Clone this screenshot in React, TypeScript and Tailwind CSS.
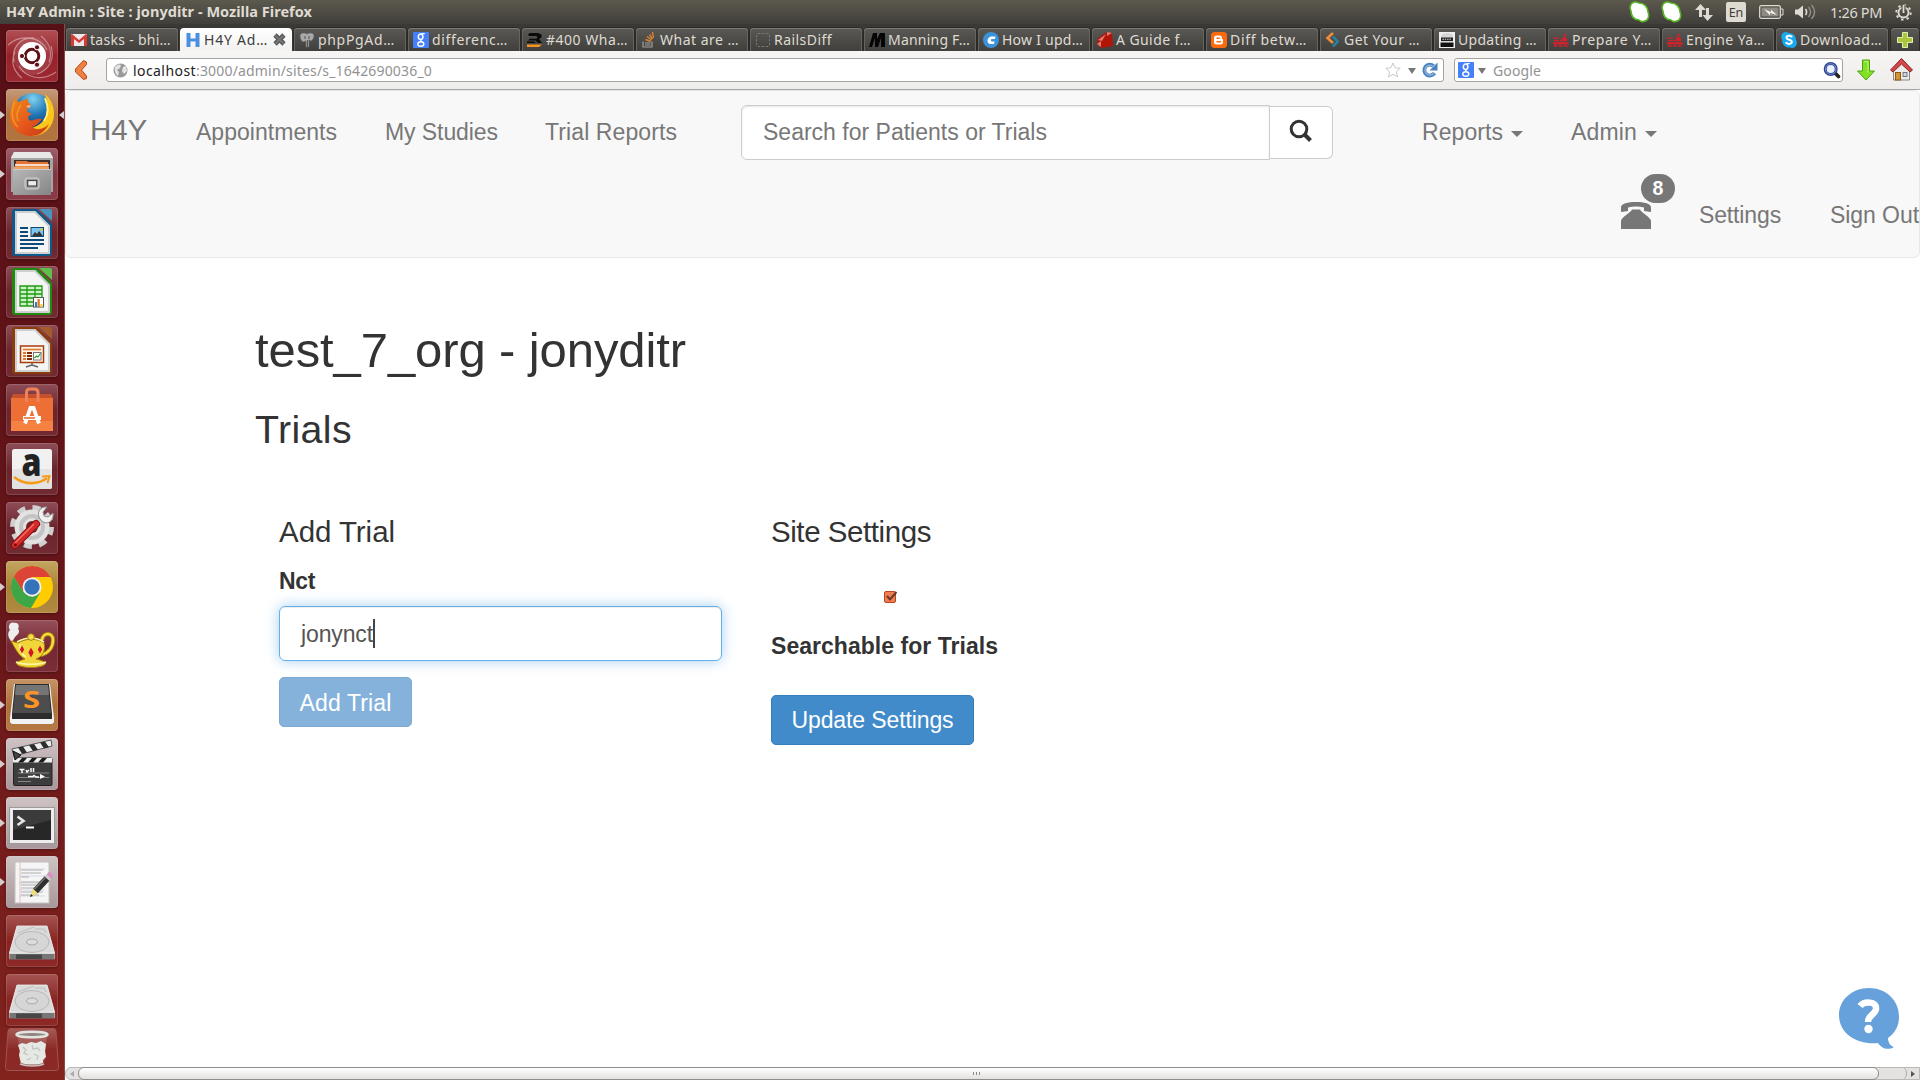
import React, { useLayoutEffect, useRef, useState } from "react";

/* Text whose letter spacing is adjusted so that the run fills a given width. */
function Fit({ w, className = "", children }: { w: number; className?: string; children: React.ReactNode }) {
  const ref = useRef<HTMLSpanElement>(null);
  const [gap, setGap] = useState(0);
  useLayoutEffect(() => {
    const el = ref.current;
    if (!el) return;
    const n = (el.textContent || "").length;
    setGap((w - el.getBoundingClientRect().width) / n);
  }, [w]);
  return (
    <span ref={ref} className={`inline-block shrink-0 whitespace-pre ${className}`} style={{ letterSpacing: gap }}>
      {children}
    </span>
  );
}

/* ---------- launcher icons, 52 x 52 ---------- */

const Ubuntu = () => (
  <>
    <circle cx="26" cy="26" r="19" fill="#fff" opacity=".1" />
    <g fill="none" stroke="#fff" strokeWidth="1.2" opacity=".4">
      <path d="M8 32C5 18 14 7 28 8M16 48C6 40 5 30 9 22M45 16c4 12-1 24-14 28M35 6c10 8 11 18 8 26M2 15C14 4 34 6 41 20M50 42C36 52 20 48 13 36" />
    </g>
    <circle cx="26" cy="26" r="14" fill="#fff" />
    <circle cx="26" cy="26" r="6.8" fill="none" stroke="#5c1216" strokeWidth="3" />
    <g fill="#5c1216" stroke="#fff" strokeWidth="1">
      <circle cx="16" cy="26" r="2.6" />
      <circle cx="31" cy="17.3" r="2.6" />
      <circle cx="31" cy="34.7" r="2.6" />
    </g>
  </>
);

const Firefox = () => (
  <>
    <defs>
      <radialGradient id="ffb" cx=".5" cy=".15" r=".8">
        <stop offset="0" stopColor="#7fd3ef" />
        <stop offset=".5" stopColor="#2277b8" />
        <stop offset="1" stopColor="#0c2f66" />
      </radialGradient>
      <linearGradient id="ffo" x1="0" y1="0" x2="1" y2="1">
        <stop offset="0" stopColor="#f08a1c" />
        <stop offset=".55" stopColor="#e4561c" />
        <stop offset="1" stopColor="#c93a14" />
      </linearGradient>
    </defs>
    <circle cx="27" cy="24" r="20" fill="url(#ffb)" />
    <path d="M39 5c6 5 9 12 9 20 0 13-10 22-22 22-8 0-14-4-18-9 12 4 26 1 31-9 4-8 3-17 0-24z" fill="#fbc51d" />
    <path d="M39 9c3 7 4 16-1 23" stroke="#fff27a" strokeWidth="2" fill="none" />
    <path d="M9 8c1 3 2 4 4 5 3-2 7-2 9-4-1 3 1 5 3 7 0 2-3 3-4 5 0 3 3 2 5 4-3 1-5 3-3 6 4 2 7-2 13-1-3 3-5 7-10 8 5 4 12 2 17-3-4 8-10 12-18 12C12 47 4 38 4 27c0-7 3-12 5-19z" fill="url(#ffo)" />
    <path d="M9 12c-4 9-4 20 3 26M15 16c-4 5-5 10-3 16" stroke="#f6a22b" strokeWidth="1.6" fill="none" opacity=".7" />
    <path d="M20 17l5-1-2 3z" fill="#f7c3a4" />
  </>
);

const Files = () => (
  <>
    <defs>
      <linearGradient id="fl" x1="0" y1="0" x2="1" y2="1">
        <stop offset="0" stopColor="#b8b8b8" />
        <stop offset="1" stopColor="#858585" />
      </linearGradient>
    </defs>
    <path d="M8 4h36l3 5v35H5V9z" fill="#a5a5a5" />
    <path d="M8 4h36l3 6H5z" fill="#e8e8e8" />
    <rect x="8" y="12" width="36" height="10" fill="#3c2f2b" />
    <path d="M10 13h11l1 1h20v8H9z" fill="#e07536" />
    <path d="M9 17h34" stroke="#fff" strokeWidth="1.4" />
    <path d="M8 18.5h35v3H8z" fill="#f0a35c" />
    <rect x="7" y="21" width="38" height="26" fill="url(#fl)" />
    <path d="M7 21.5h38" stroke="#ccc" />
    <rect x="19" y="30" width="14" height="11" rx="2" fill="#a6a6a6" stroke="#d3d3d3" />
    <rect x="21.7" y="32.5" width="9" height="5.5" fill="#ededed" stroke="#444" strokeWidth="1.2" />
  </>
);

const Doc = ({ dark, light, children }: { dark: string; light: string; children: React.ReactNode }) => (
  <>
    <path d="M8 2h23l15 15v29a3 3 0 0 1-3 3H9a3 3 0 0 1-3-3V5a3 3 0 0 1 2-3z" fill={dark} />
    <path d="M10 5h19l14 14v27H10z" fill="#f4f4f4" stroke="#cfcfcf" strokeWidth="2" />
    <path d="M33 2h11a2 2 0 0 1 2 2v10z" fill={light} />
    {children}
  </>
);

const Writer = () => (
  <Doc dark="#0d5a8a" light="#4b93bf">
    <path d="M14 21h8M14 25h8M14 29h8M14 33h24M14 37h24M14 41h18" stroke="#0d4a78" strokeWidth="1.8" />
    <rect x="25" y="20.500" width="12.500" height="9" fill="#7cc5ee" stroke="#0d4a78" />
    <path d="M26 29l3-4 2 2 2-3 4 5z" fill="#333" />
    <circle cx="35.500" cy="22.500" r="1.300" fill="#f2c21a" />
  </Doc>
);
const Calc = () => (
  <Doc dark="#1f8a10" light="#5fbf4b">
    <rect x="14" y="20" width="22" height="20" fill="#cdf2c4" />
    <path d="M14 20h22v20H14zM14 24h22M14 28h22M14 32h22M14 36h22M21 20v20M29 20v20" stroke="#1f9a14" strokeWidth="1.3" fill="none" />
    <rect x="27.500" y="31.500" width="10" height="9.500" fill="#fff" stroke="#555" />
    <path d="M29 36h2v5h-2z" fill="#2b7fd0" />
    <path d="M31.500 33h2.300v8h-2.300z" fill="#e07a20" />
    <path d="M34.500 38h2v3h-2z" fill="#f3cc2c" />
  </Doc>
);
const Impress = () => (
  <Doc dark="#8a3c0c" light="#a45c2c">
    <rect x="14.500" y="21" width="23" height="16.500" fill="#fff2e6" stroke="#a83c10" strokeWidth="1.500" />
    <path d="M17 24.500h18" stroke="#e0782c" strokeWidth="1.600" />
    <path d="M17 28h3M17 31h3M17 34h3" stroke="#e0782c" strokeWidth="1.800" />
    <path d="M21 28h5M21 31h5M21 34h5" stroke="#7a2c0c" strokeWidth="1.800" />
    <rect x="27.500" y="27.500" width="7.500" height="7.500" fill="#fff" stroke="#777" />
    <path d="M28.500 33l2-2 1.500 1 2.500-3.500" stroke="#2a9a2a" strokeWidth="1.200" fill="none" />
    <path d="M26 38v2l-6 2M26 40l6 2" stroke="#666" strokeWidth="1.500" fill="none" />
  </Doc>
);

const Software = () => (
  <>
    <path d="M7 10h38l2 4H5z" fill="#c4502c" />
    <path d="M5 14h42v33H5z" fill="#ee6f35" />
    <path d="M5 37h42v10H5z" fill="#f58242" />
    <path d="M20.500 18V8.500C20.500 6 22 5 24 5h4c2 0 4 1 4 3.500V18" fill="none" stroke="#f0805a" strokeWidth="3" />
    <path d="M19 39.500l5.500-15.500h3L33 39.500" fill="none" stroke="#fff" strokeWidth="3.800" />
    <path d="M17 34h18" stroke="#fff" strokeWidth="4" />
    <path d="M18 34h11" stroke="#e9632c" strokeWidth="1.500" />
  </>
);

const Amazon = () => (
  <>
    <rect x="6" y="6" width="40" height="40" rx="2.500" fill="#f1f1f1" />
    <rect x="6" y="26" width="40" height="20" rx="2.500" fill="#e2e2e2" />
    <text x="15.500" y="33" fontFamily="Open Sans, sans-serif" fontSize="38" fontWeight="800" fill="#222" textLength="20" lengthAdjust="spacingAndGlyphs">a</text>
    <path d="M8 34c10 8 24 8 33 1" stroke="#f69a1a" strokeWidth="2.600" fill="none" />
    <path d="M36 33.500l7.500-.5-2 7" stroke="#f69a1a" strokeWidth="2" fill="none" />
  </>
);

const Gear = () => (
  <>
    <circle cx="26" cy="25" r="19.500" fill="none" stroke="#cfcfcf" strokeWidth="5" strokeDasharray="8 7.300" />
    <circle cx="26" cy="25" r="17.500" fill="#e2e2e2" />
    <circle cx="26" cy="25" r="11" fill="none" stroke="#c3c3c3" strokeWidth="4" />
    <circle cx="26" cy="25" r="6" fill="#6d242c" />
    <path d="M28 25l7-6" stroke="#c9c9c9" strokeWidth="6" />
    <path d="M41 5c-7-1-11 6-7 12l3 3c6 3 11-2 10-9l-5 4-4-1-1-4z" fill="#f0f0f0" stroke="#8e8e8e" />
    <path d="M9 43l21-21" stroke="#8f1010" strokeWidth="8" strokeLinecap="round" />
    <path d="M9 43l21-21" stroke="#d52b28" strokeWidth="6" strokeLinecap="round" />
    <path d="M9 41l19-19" stroke="#f0736c" strokeWidth="1.400" />
    <circle cx="9.500" cy="43" r="1.400" fill="#6b0c0c" />
  </>
);

const Chrome = () => (
  <>
    <circle cx="26" cy="26" r="21" fill="#fc0" />
    <path d="M7.800 15.500A21 21 0 0 1 44.500 16H26l-9 15z" fill="#dc4437" />
    <path d="M7.800 15.500A21 21 0 0 0 25 47l9.500-16-8 5-9-5z" fill="#3fa648" />
    <circle cx="26" cy="26" r="9.500" fill="#f2f2f2" />
    <circle cx="26" cy="26" r="7.700" fill="#3573ba" />
  </>
);

const Teapot = () => (
  <>
    <path d="M6 22c-4-4-5-9-2-12-3-4 1-9 4-7 4-1 6 3 4 6 3 3-1 6-3 8z" fill="#eee" />
    <path d="M36 20c1-8 11-8 11 0 0 7-4 13-12 15" fill="none" stroke="#b18a0c" strokeWidth="4" />
    <path d="M36 20c1-8 11-8 11 0 0 7-4 13-12 15" fill="none" stroke="#f3dc3c" strokeWidth="2.400" />
    <path d="M5 21l7 2c8-5 19-5 26 0 2 8-2 14-8 16 4 1 8 2 10 4-2 6-28 6-30 0 2-2 6-3 9-4-6-3-9-9-14-18z" fill="#f1d63a" stroke="#a67f08" />
    <path d="M11 22c9-5 19-5 27 0M10 42c8 3 22 3 30 0M14 24c-1 5 2 11 6 13" stroke="#fff7a8" strokeWidth="1.600" fill="none" />
    <circle cx="25" cy="17" r="3.300" fill="#f4de4c" stroke="#a67f08" />
    <path d="M16 25.500l2.200 4-2.200 4-2.200-4zM25 27.500l2.700 5-2.700 5-2.700-5zM34 25.500l2.200 4-2.200 4-2.200-4z" fill="#d4182c" />
  </>
);

const Sublime = () => (
  <>
    <path d="M8 5h36l4 34v4a3 3 0 0 1-3 2H7a3 3 0 0 1-3-2v-4z" fill="#f2f2f2" />
    <path d="M9 5h34l3 30v5H6v-5z" fill="#2c2c2c" />
    <path d="M10 6h32l3 28H7z" fill="#4d4d4d" />
    <path d="M10 6h32l1 10H9z" fill="#757575" />
    <text x="17" y="28.500" fontFamily="Open Sans, sans-serif" fontSize="23" fontWeight="700" fill="#fb9327" textLength="17" lengthAdjust="spacingAndGlyphs">S</text>
  </>
);

const Clapper = () => (
  <>
    <rect x="7.500" y="20" width="38.500" height="27.500" rx="1" fill="#3d3d3d" stroke="#222" />
    <path d="M7 20h39v4.500H7z" fill="#eee" />
    <path d="M12 24.500l4-4.500h5l-4 4.500zM22 24.500l4-4.500h5l-4 4.500zM32 24.500l4-4.500h5l-4 4.500z" fill="#1c1c1c" />
    <path d="M6 11L45 2l1 6-38 10z" fill="#eee" stroke="#555" />
    <path d="M12 9.600l5-1.100 4 6-5 1.300zM23 7.200l5-1.200 4 5.800-5 1.300zM34 4.600l5-1.200 4 5.800-5 1.300z" fill="#2c2c2c" />
    <path d="M7 13l8 4-6 5z" fill="#444" stroke="#111" />
    <path d="M12 35h31M12 39.500h31M12 43.500h13" stroke="#999" strokeWidth=".8" />
    <path d="M13.500 31.500h5M16 31v4M20 32l1 2 2-2M25 30v4M27.500 30v4M22 38.500h5l1-1 2 1.500h3" stroke="#fff" strokeWidth="1.500" fill="none" />
    <path d="M34 36l5 2.500-5 2.500z" fill="#fff" />
  </>
);

const Terminal = () => (
  <>
    <rect x="3.500" y="10.500" width="45" height="36" fill="#ededed" stroke="#9b9b9b" />
    <rect x="7" y="13" width="38" height="30" fill="#272727" />
    <path d="M7 13h38v10L7 33z" fill="#3b3b3b" />
    <path d="M11.500 19.500l6 4.500-6 4" stroke="#e5e5e5" strokeWidth="2.600" fill="none" />
    <path d="M20 30.500h8" stroke="#fff" strokeWidth="2" />
  </>
);

const Editor = () => (
  <>
    <rect x="9" y="6" width="34" height="41" fill="#f5f5f5" stroke="#c2c2c2" />
    <path d="M13 13h26M13 20h26M13 27h26M13 34h26M13 40h26" stroke="#d5dbe6" strokeWidth="1" />
    <path d="M15 14h22M15 17h20M15 21h8M15 26h20M15 29h18M15 32h14M15 36h22M15 39h18" stroke="#8a8a8a" strokeWidth=".8" opacity=".8" />
    <path d="M14 6v41" stroke="#eaa" strokeWidth=".7" />
    <path d="M24 41l3-8.500 5 5z" fill="#eedc78" />
    <path d="M24 41l1-3 2 2z" fill="#222" />
    <path d="M29.500 35L41 22.500" stroke="#2f2f2f" strokeWidth="6.500" />
    <path d="M28.500 33L39.500 21.500" stroke="#777" strokeWidth="1.400" />
    <path d="M41 22.500l2-2" stroke="#c9c9c9" strokeWidth="6.500" />
    <path d="M43 20.500l2.500-2.500" stroke="#db8fc0" strokeWidth="6.500" />
  </>
);

const Disk = () => (
  <>
    <path d="M11 11h30l8 28v5H3v-5z" fill="#cfcfcf" />
    <path d="M11 11h30l7.500 27h-45z" fill="#dadada" stroke="#efefef" strokeWidth=".8" />
    <ellipse cx="26" cy="27" rx="17" ry="10.500" fill="#d6d6d6" stroke="#b4b4b4" strokeWidth=".9" />
    <ellipse cx="26" cy="27" rx="5.500" ry="3" fill="#dcdcdc" stroke="#a2a2a2" strokeWidth=".9" />
    <path d="M12 18l16-6M29 14h9l2 4" stroke="#bdbdbd" fill="none" />
    <path d="M3.500 39h45v5.500h-45z" fill="#777" />
    <path d="M10 39.500h26v4.500H10z" fill="#333" opacity=".7" />
  </>
);

const Trash = () => (
  <>
    <path d="M12 8l2 28c5 3 19 3 24 0l3-28z" fill="#fff" opacity=".16" />
    <path d="M12 17l4-2 4 1 5-2 5 1 5-2 5 3-1 7 1 6-3 3v3c-6 2-15 2-22 0l-1-4-1-4 1-4z" fill="#e6e8e4" />
    <path d="M17 19l3 3-2 3 4 2M26 17l1 4 5-1 2 3M28 26l4 2-1 4M21 32l4-2" stroke="#c1c4bf" strokeWidth="1.300" fill="none" />
    <path d="M14 36c6 2.500 19 2.500 24 0" stroke="#c6c0be" strokeWidth="1.500" fill="none" />
    <ellipse cx="26" cy="6.500" rx="15.500" ry="2.800" fill="#8f8482" stroke="#e2e4e0" strokeWidth="2.500" />
  </>
);

const plain = "bg-gradient-to-b from-[#8e4d57] via-[#6a242c] to-[#722a33]";
const silver = "bg-gradient-to-b from-[#cfc3c4] to-[#a8979a]";
const red = "bg-gradient-to-b from-[#a55353] via-[#872420] to-[#8d2a28]";

const launcher: { icon: React.ReactNode; bg: string; run?: boolean; active?: boolean }[] = [
  { icon: <Ubuntu />, bg: "bg-gradient-to-b from-[#b04f55] via-[#962029] to-[#9c2a33]" },
  { icon: <Firefox />, bg: "bg-gradient-to-b from-[#c49a78] via-[#ae7040] to-[#b3753f]", run: true, active: true },
  { icon: <Files />, bg: "bg-gradient-to-b from-[#9d5f6a] via-[#833440] to-[#8a3b47]", run: true },
  { icon: <Writer />, bg: plain },
  { icon: <Calc />, bg: plain },
  { icon: <Impress />, bg: plain },
  { icon: <Software />, bg: plain },
  { icon: <Amazon />, bg: plain },
  { icon: <Gear />, bg: plain },
  { icon: <Chrome />, bg: "bg-gradient-to-b from-[#c4a660] via-[#aa8136] to-[#b08a42]", run: true },
  { icon: <Teapot />, bg: "bg-gradient-to-b from-[#96515b] via-[#762631] to-[#7b2e38]" },
  { icon: <Sublime />, bg: "bg-gradient-to-b from-[#c69467] via-[#ae7038] to-[#b57a45]", run: true },
  { icon: <Clapper />, bg: silver, run: true },
  { icon: <Terminal />, bg: silver, run: true },
  { icon: <Editor />, bg: silver, run: true },
  { icon: <Disk />, bg: red },
  { icon: <Disk />, bg: red },
];

function Launcher() {
  return (
    <aside className="flex w-[65px] shrink-0 flex-col gap-[7px] border-r border-[#8c4848] bg-gradient-to-b from-[#561016] via-[#651519] to-[#82231e] pt-[6px]">
      {launcher.map((l, i) => (
        <div key={i} className="flex h-[52px] shrink-0 items-center">
          <div className="w-[6px]">
            {l.run && <div className="h-0 w-0 border-y-[4px] border-l-[5px] border-y-transparent border-l-[#d5cccc]" />}
          </div>
          <div className={`h-[52px] w-[52px] rounded-[4px] shadow-[inset_0_0_0_1px_rgba(255,255,255,0.13),0_1px_3px_rgba(0,0,0,0.3)] ${l.bg}`}>
            <svg width="52" height="52" viewBox="0 0 52 52" className="overflow-visible">{l.icon}</svg>
          </div>
          {l.active && <div className="ml-px h-0 w-0 border-y-[4px] border-r-[5px] border-y-transparent border-r-[#d5cccc]" />}
        </div>
      ))}
      <div className="-mt-[5px] ml-[5px] h-[43px] w-[54px]">
        <svg width="54" height="43" viewBox="0 0 54 43">
          <defs>
            <linearGradient id="trash" x1="0" y1="0" x2="0" y2="1">
              <stop offset="0" stopColor="#a65a58" />
              <stop offset=".5" stopColor="#8a2925" />
            </linearGradient>
          </defs>
          <path d="M6 .5h42a3 3 0 0 1 3 3l2.500 36a3 3 0 0 1-3 3h-47a3 3 0 0 1-3-3L3 3.500a3 3 0 0 1 3-3z" fill="url(#trash)" stroke="#a35350" />
          <g transform="translate(1 0)"><Trash /></g>
        </svg>
      </div>
    </aside>
  );
}

/* ---------- tab icons, 16 x 16 ---------- */

const GoogleG = () => (
  <>
    <rect width="16" height="16" rx="1" fill="#4680f8" />
    <g fill="none" stroke="#fff">
      <ellipse cx="7.600" cy="4.800" rx="2.300" ry="2.700" strokeWidth="1.500" />
      <path d="M8.500 1.600h3.300" strokeWidth="1.100" />
      <path d="M8.500 7.500c-1.300 1-.8 1.500.5 2.200" strokeWidth="1.300" />
      <ellipse cx="7.800" cy="12" rx="3" ry="2.300" strokeWidth="1.400" />
    </g>
  </>
);
const Train = () => (
  <path
    d="M0 5.500h6v1.300H0zM1 8h5v1.300H1zM7 7.500h4v1.800H7zM9.500 5h1.200V2h2.500v1.300h-1v2.700H14v3.300H9.500zM0 10.300h14.500l1.500 1.500v.8H0zM1 13.300h3.500v1.400H1zM6 13.300h3.500v1.400H6zM11 13.300h3.500v1.400H11z"
    fill="#d81f2c"
  />
);

const tabs: { t: string; w: number; icon: React.ReactNode }[] = [
  { t: "tasks - bhi…", w: 81, icon: <><rect y="2" width="16" height="12" rx="1" fill="#e9e9e9" /><path d="M0 3v11h3V7l5 4 5-4v7h3V3l-1-1-7 6-7-6z" fill="#d93a35" /></> },
  { t: "H4Y Ad…", w: 64, icon: <path d="M1.500 1h4v5.500h5V1h4v14h-4V9.500h-5V15h-4z" fill="#4a90e2" /> },
  { t: "phpPgAd…", w: 77, icon: <><path d="M1 3c2-3 5-2 7-1 3-2 6-1 7 1 0 3-1 5-3 6l-2-1v7H7V9L4 10C2 9 1 6 1 3z" fill="#a9a9a9" stroke="#666" strokeWidth=".7" /><path d="M6 4v3M10 4v3M8.500 8v7" stroke="#555" /></> },
  { t: "differenc…", w: 76, icon: <GoogleG /> },
  { t: "#400 Wha…", w: 82, icon: <><path d="M1 2.500l2-1.500h8l3.500 1.500v3L12 7l3 4h-4L8.500 8.500H1L3 6.700h6.500l1-1.200-1-1.500H2z" fill="#0a0a0a" /><path d="M0 9.500h7l2 1.500H0z" fill="#0a0a0a" /><path d="M0 12.500h15l-3 2.500H0z" fill="#f7931e" /></> },
  { t: "What are …", w: 79, icon: <><path d="M2 9.500V15h9V9.500" stroke="#a0a09c" strokeWidth="1.200" fill="none" /><path d="M4 13h5.500M4 11h5.500" stroke="#a0a09c" strokeWidth="1.100" /><path d="M4.500 7.500L10 9.500M6 4.500l4.500 3.500M8.500 2.500L11.500 7M11.500 0l1 6" stroke="#dd8434" strokeWidth="1.400" /></> },
  { t: "RailsDiff", w: 58, icon: <rect x="1.500" y="1.500" width="13" height="13" rx="1.500" fill="none" stroke="#777" strokeDasharray="2.500 1.500" /> },
  { t: "Manning F…", w: 82, icon: <path d="M4 1h4v6l3-6h5v14h-4V6l-3 9H6V6l-3 9H0z" fill="#050505" /> },
  { t: "How I upd…", w: 81, icon: <><circle cx="8" cy="8" r="8" fill="#3a92d8" /><path d="M12.500 4.500H8.500c-2 0-4 2-4 4s1 3.500 3 3.500H11l.6-2.600H9c-1.500 0-1.600-2.400 0-2.400h3z" fill="#fff" /></> },
  { t: "A Guide f…", w: 75, icon: <><path d="M10 0l5 1 1 13-12 2-4-4 1-6z" fill="#b11508" /><path d="M1 8l8-6-4 7zM10 0l5 1-5 3zM0 12l4-3v6z" fill="#f0a79c" opacity=".7" /></> },
  { t: "Diff betw…", w: 77, icon: <><rect width="16" height="16" rx="3.500" fill="#fb6a0c" /><path d="M5.500 3.500h3a2.500 2.500 0 0 1 2.500 2.500c0 1 .4 1.300 1 1.500v2.500a2.500 2.500 0 0 1-2.500 2.500h-4A2.500 2.500 0 0 1 3 10V6a2.500 2.500 0 0 1 2.500-2.500z" fill="#fff" /><path d="M6 6.300h2.200M6 9.700h3.600" stroke="#fb6a0c" strokeWidth="1.400" strokeLinecap="round" /></> },
  { t: "Get Your …", w: 76, icon: <><path d="M8 1L2.500 6 8 11" stroke="#f08c3c" strokeWidth="2.600" fill="none" /><path d="M8 4.500l4.500 5-4.500 5" stroke="#1f87a6" strokeWidth="2.600" fill="none" /></> },
  { t: "Updating …", w: 79, icon: <><rect width="16" height="16" fill="#eee" /><path d="M2 5a6 4 0 0 1 12 0v5H2z" fill="#d5d5d5" /><path d="M2 5.500h12V9H2z" fill="#222" /><path d="M1.500 10.500h13V15h-13z" fill="#111" /><path d="M3.500 7.200h9" stroke="#ddd" strokeDasharray="1.500 .8" /></> },
  { t: "Prepare Y…", w: 80, icon: <Train /> },
  { t: "Engine Ya…", w: 79, icon: <Train /> },
  { t: "Download…", w: 82, icon: <><path d="M4 0c2 0 3 .5 4 1 4 0 7 3 7 7 1 1 1.500 5-1 7-2 1.500-4 1-5 .5C4 16 1 12 1.200 8-.5 5 0 1 4 0z" fill="#19a9ee" /><path d="M11 5.200C10 3.200 5.500 3.300 5.500 5.800c0 2.300 5.300 1.500 5.300 4 0 2.700-4.700 2.800-6 .5" fill="none" stroke="#fff" strokeWidth="2" /></> },
];

function TabStrip() {
  return (
    <div className="flex h-[27px] bg-[#3a3935] pl-px pt-[4px]">
      {tabs.map((tab, i) => {
        const on = i === 1;
        return (
          <div
            key={tab.t}
            className={`mr-[2px] flex h-[23px] w-[112px] shrink-0 items-center rounded-t-[4px] pl-[5px] text-[14px] leading-[20px] ${
              on ? "bg-gradient-to-b from-white to-[#f2f1f0] text-[#3c3c3c]" : "bg-gradient-to-b from-[#5a5955] to-[#403f3c] text-[#dfdbd2] shadow-[inset_0_1px_0_#7b7a76,inset_1px_0_0_#65645f,inset_-1px_0_0_#65645f,0_0_0_1px_#2b2a27]"
            }`}
          >
            <svg width="16" height="16" viewBox="0 0 16 16" className="mr-[3px] shrink-0">{tab.icon}</svg>
            <Fit w={tab.w}>{tab.t}</Fit>
            {on && (
              <svg width="13" height="13" viewBox="0 0 13 13" className="ml-[5px] shrink-0">
                <path d="M2 2l9 9M11 2l-9 9" stroke="#555" strokeWidth="4.600" />
                <path d="M2.500 2.500l8 8M10.500 2.500l-8 8" stroke="#777" strokeWidth="2" />
              </svg>
            )}
          </div>
        );
      })}
      <div className="ml-px flex h-[23px] w-[28px] items-center justify-center rounded-t-[4px] bg-gradient-to-b from-[#5a5955] to-[#403f3c] shadow-[inset_0_1px_0_#7b7a76,0_0_0_1px_#2b2a27]">
        <svg width="16" height="16" viewBox="0 0 16 16">
          <path d="M5.500.5h5v5h5v5h-5v5h-5v-5h-5v-5h5z" fill="#a9c63c" stroke="#e3efb0" />
        </svg>
      </div>
    </div>
  );
}

const Tri = () => <div className="mt-[2px] h-0 w-0 border-x-[4px] border-t-[6px] border-x-transparent border-t-[#777]" />;

function AddressBar() {
  return (
    <div className="flex h-[39px] items-start border-b border-[#a9a7a4] bg-gradient-to-b from-[#f6f5f4] to-[#efedeb] pt-[7px] text-[14px] leading-[20px]">
      <svg width="14" height="22" viewBox="0 0 14 22" className="ml-[9px] mt-px shrink-0">
        <path d="M9.500 1.500l3 1.500v2.500L7.500 11l5 6v2.500l-3 1L1.500 13v-3z" fill="#ee8040" stroke="#b8441a" />
      </svg>
      <div className="ml-[18px] flex h-[24px] w-[1338px] items-center rounded-[3px] border border-[#a5a3a0] bg-white pl-[6px]">
        <svg width="15" height="15" viewBox="0 0 15 15">
          <circle cx="7.500" cy="7.500" r="7" fill="#999" />
          <path d="M2 4c2-3 5-3 6-2l-1 3-3 2 2 2-1 4C3 12 1 8 2 4zM10 4l3-1 1 5-3 3-2-3z" fill="#e4e4e4" />
        </svg>
        <div className="ml-[5px] mt-px flex">
          <Fit w={63} className="text-[#222]">localhost</Fit>
          <Fit w={236} className="text-[#929292]">:3000/admin/sites/s_1642690036_0</Fit>
        </div>
        <div className="ml-auto flex items-center pr-[5px]">
          <svg width="16" height="16" viewBox="0 0 16 16">
            <path d="M8 1l2.100 4.700 5.100.6-3.800 3.400 1.100 5.100L8 12.300l-4.500 2.500 1.100-5.100L.8 6.300l5.100-.6z" fill="#fff" stroke="#c9c9c9" />
          </svg>
          <div className="ml-[7px] mr-[6px]"><Tri /></div>
          <svg width="16" height="16" viewBox="0 0 16 16">
            <path d="M12.500 11A5.500 5.500 0 1 1 11.500 4" fill="none" stroke="#4b82bd" strokeWidth="3.800" />
            <path d="M15.500.5v8h-8z" fill="#4b82bd" />
            <path d="M12 11A5 5 0 1 1 11.500 4.500" fill="none" stroke="#8bb5e0" strokeWidth="1.300" />
          </svg>
        </div>
      </div>
      <div className="ml-[10px] flex h-[24px] w-[389px] items-center rounded-[3px] border border-[#a5a3a0] bg-white pl-[3px] pr-px">
        <svg width="16" height="16" viewBox="0 0 16 16"><GoogleG /></svg>
        <div className="ml-[4px] mr-[7px]"><Tri /></div>
        <Fit w={48} className="mt-px text-[#929292]">Google</Fit>
        <svg width="18" height="18" viewBox="0 0 18 18" className="ml-auto">
          <path d="M12 12l3.500 3.500" stroke="#222" strokeWidth="3.600" strokeLinecap="round" />
          <circle cx="7.700" cy="8" r="5.500" fill="#eaf1fb" stroke="#29408f" strokeWidth="3" />
          <circle cx="7.700" cy="8" r="5.300" fill="none" stroke="#7790cf" strokeWidth="1" />
        </svg>
      </div>
      <svg width="18" height="22" viewBox="0 0 18 22" className="ml-[14px] mt-px shrink-0">
        <path d="M5.500 1h7v11h5L9 21 .5 12h5z" fill="#84e024" stroke="#4ea10c" />
        <path d="M7 2.500h4v11" stroke="#bdf77a" fill="none" />
      </svg>
      <svg width="23" height="23" viewBox="0 0 23 23" className="ml-[15px] shrink-0">
        <path d="M3.500 10v12h16V10l-8-6z" fill="#ececea" stroke="#888" />
        <path d="M11.500.5L22.500 12l-2.500 2-8.500-8L3 14 .5 12z" fill="#d2484a" stroke="#8e2324" />
        <rect x="5.500" y="14.500" width="5" height="7.500" fill="#d99030" stroke="#8d5a12" />
        <rect x="13" y="14.500" width="4" height="4" fill="#c7d8ea" stroke="#777" />
      </svg>
    </div>
  );
}

const Skype = () => (
  <svg width="21" height="22" viewBox="0 0 21 22">
    <path d="M6 1c2 0 3 .6 4 1 5 0 9 4 9 9 1 2 1 6-1 8-3 2-6 2-8 0-5 0-8-4-8-9C0 6 2 1 6 1z" fill="#fff" stroke="#58b524" strokeWidth="1.600" />
  </svg>
);

function TopPanel() {
  return (
    <header className="flex h-[24px] items-center bg-gradient-to-b from-[#5c594e] to-[#403f3a] pl-[6px] text-[14.500px] leading-[22px] text-[#dfdbd2]">
      <Fit w={306} className="mb-[2px] font-bold">H4Y Admin : Site : jonyditr - Mozilla Firefox</Fit>
      <div className="ml-auto flex items-center">
        <Skype />
        <div className="ml-[11px]"><Skype /></div>
        <svg width="18" height="17" viewBox="0 0 18 17" className="ml-[13px]">
          <path d="M5.500 0L11 6H7v7H4V6H0z" fill="#dfdbd2" />
          <path d="M12.500 17L7.500 11H11V4h3v7h4z" fill="#dfdbd2" />
        </svg>
        <div className="ml-[13px] h-[20px] w-[20px] rounded-[2px] bg-[#dfdbd2] text-center text-[12.500px] leading-[21px] text-[#3c3b37]">En</div>
        <svg width="25" height="14" viewBox="0 0 25 14" className="ml-[13px]">
          <rect x=".7" y=".7" width="20.600" height="12.600" rx="1.500" fill="none" stroke="#dfdbd2" strokeWidth="1.300" />
          <rect x="2.500" y="2.500" width="17" height="9" fill="#8d8a82" />
          <path d="M22 4h2v6h-2" fill="none" stroke="#dfdbd2" />
          <path d="M5 4l7 3V4.500L18 10l-7-2v2.500z" fill="#eeebe4" />
        </svg>
        <svg width="21" height="16" viewBox="0 0 21 16" className="ml-[11px]">
          <path d="M0 5.500h3L8 1.500v13L3 10.500H0z" fill="#dfdbd2" />
          <path d="M10.500 5c1.500 2 1.500 4 0 6" stroke="#dfdbd2" strokeWidth="1.600" fill="none" />
          <path d="M13.500 3c2.500 3 2.500 7 0 10M16.500 1c4 4.500 4 9.500 0 14" stroke="#8f8c83" strokeWidth="1.500" fill="none" />
        </svg>
        <Fit w={52} className="mb-px ml-[14px]">1:26 PM</Fit>
        <svg width="17" height="17" viewBox="0 0 17 17" className="ml-[13px] mr-[8px]">
          <circle cx="8.500" cy="8.500" r="7.200" fill="none" stroke="#dfdbd2" strokeWidth="2" strokeDasharray="2.400 3.250" />
          <circle cx="8.500" cy="8.500" r="5" fill="none" stroke="#dfdbd2" strokeWidth="1.900" />
          <path d="M8.500 1v8" stroke="#504e46" strokeWidth="4" />
          <path d="M8.500 1v8" stroke="#dfdbd2" strokeWidth="1.800" />
        </svg>
      </div>
    </header>
  );
}

/* ---------- page ---------- */

const Caret = () => <div className="h-0 w-0 border-x-[6.500px] border-t-[6.500px] border-x-transparent border-t-[#777]" />;

function Navbar() {
  return (
    <nav className="h-[168px] rounded-[6px] border border-[#e7e7e7] bg-[#f8f8f8] text-[23px] leading-[33px] text-[#777]">
      <div className="flex h-[82px] items-start pt-[14px]">
        <a className="ml-[24px] mt-[8px] text-[29.500px]"><Fit w={57}>H4Y</Fit></a>
        <a className="ml-[49px] mt-[11px]"><Fit w={141}>Appointments</Fit></a>
        <a className="ml-[48px] mt-[11px]"><Fit w={113}>My Studies</Fit></a>
        <a className="ml-[47px] mt-[11px]"><Fit w={132}>Trial Reports</Fit></a>
        <div className="ml-[64px] flex items-start">
          <div className="h-[55px] w-[529px] rounded-l-[6px] border border-[#ccc] bg-white pl-[21px] pt-[10px] shadow-[inset_0_1px_2px_rgba(0,0,0,0.1)]">
            <Fit w={284}>Search for Patients or Trials</Fit>
          </div>
          <div className="mt-px flex h-[53px] w-[63px] items-start rounded-r-[6px] border border-l-0 border-[#ccc] bg-white pl-[19px] pt-[12px]">
            <svg width="24" height="24" viewBox="0 0 24 24">
              <circle cx="10" cy="10" r="7.800" fill="none" stroke="#333" strokeWidth="3" />
              <path d="M15.500 15.500l6 6" stroke="#333" strokeWidth="4" />
            </svg>
          </div>
        </div>
        <a className="ml-[89px] mt-[11px] flex items-center"><Fit w={81}>Reports</Fit><span className="ml-[8px] mt-[2px]"><Caret /></span></a>
        <a className="ml-[48px] mt-[11px] flex items-center"><Fit w={66}>Admin</Fit><span className="ml-[8px] mt-[2px]"><Caret /></span></a>
      </div>
      <div className="flex h-[84px] items-start justify-end whitespace-nowrap pt-px">
        <div className="flex items-start">
          <svg width="30" height="27" viewBox="0 0 30 27" className="mt-[28px]">
            <path d="M15 0c8 0 15 1.500 15 5.500V10l-7-1V5.500C18 4 12 4 7 5.500V9l-7 1V5.500C0 1.500 7 0 15 0z" fill="#777" />
            <path d="M11 7.500h8c1 3 11 8 11 11.500V27H0v-8c0-3.500 10-8.500 11-11.500z" fill="#777" />
          </svg>
          <span className="-ml-[10px] h-[29px] w-[34px] rounded-[15px] bg-[#777] text-center text-[19.500px] font-bold leading-[29px] text-white">8</span>
        </div>
        <a className="ml-[24px] mt-[25px]"><Fit w={82}>Settings</Fit></a>
        <a className="ml-[49px] mt-[25px]"><Fit w={89}>Sign Out</Fit></a>
      </div>
    </nav>
  );
}

function Page() {
  return (
    <main className="relative flex-1 overflow-hidden bg-white font-['Liberation_Sans',Arial,sans-serif] text-[#333]">
      <Navbar />
      <div className="pl-[190px] pt-[65px]">
        <h1 className="h-[54px] text-[49px] leading-[54px]"><Fit w={431}>test_7_org - jonyditr</Fit></h1>
        <h2 className="mt-[30px] h-[44px] text-[39.300px] leading-[44px]"><Fit w={97}>Trials</Fit></h2>
        <div className="mt-[65px] flex pl-[24px] text-[23px] leading-[32px]">
          <section className="w-[492px]">
            <h3 className="h-[32px] text-[29.500px]"><Fit w={116}>Add Trial</Fit></h3>
            <label className="mt-[17px] flex h-[32px] font-bold"><Fit w={36}>Nct</Fit></label>
            <div className="mt-[9px] flex h-[55px] w-[443px] items-center rounded-[6px] border border-[#66afe9] pl-[21px] text-[#555] shadow-[inset_0_1px_1px_rgba(0,0,0,0.075),0_0_13px_rgba(102,175,233,0.6)]">
              <Fit w={72}>jonynct</Fit>
              <span className="h-[29px] w-[2px] bg-[#444]" />
            </div>
            <button className="mt-[16px] flex h-[50px] w-[133px] items-center justify-center rounded-[5px] border border-[#7baad4] bg-[#85b2db] pt-px text-white"><Fit w={92}>Add Trial</Fit></button>
          </section>
          <section>
            <h3 className="h-[32px] text-[29.500px]"><Fit w={160}>Site Settings</Fit></h3>
            <svg width="15" height="14" viewBox="0 0 15 14" className="ml-[112px] mt-[42px]">
              <rect x="1.500" y="1.500" width="11" height="11" rx="1.500" fill="#ef7f52" stroke="#b5481f" />
              <path d="M4 6l3 3.500L13.500 2" stroke="#6b3a26" strokeWidth="2" fill="none" />
            </svg>
            <label className="mt-[26px] flex h-[32px] font-bold"><Fit w={227}>Searchable for Trials</Fit></label>
            <button className="mt-[33px] flex h-[50px] w-[203px] items-center justify-center rounded-[5px] border border-[#357ebd] bg-[#428bca] text-white"><Fit w={162}>Update Settings</Fit></button>
          </section>
        </div>
      </div>
      <svg width="61" height="62" viewBox="0 0 61 62" className="absolute bottom-[17px] right-[20px]">
        <path d="M30 0C47 0 60 12 60 29c0 9-4 16-11 21 0 4 2 8 6 9-6 4-13 1-16-4C20 57 0 47 0 27 0 12 13 0 30 0z" fill="#66a1dc" />
        <path d="M21 18c4-5 17-5 16 3-1 6-8 6-8 13" fill="none" stroke="#fff" strokeWidth="6.500" />
        <circle cx="29.500" cy="41" r="4.200" fill="#fff" />
      </svg>
    </main>
  );
}

function ScrollBar() {
  return (
    <div className="flex h-[13px] items-center rounded-l-[6px] border border-[#bbb8b5] bg-[#e4e2e0]">
      <div className="flex w-[12px] justify-center"><div className="h-0 w-0 border-y-[3px] border-r-[4px] border-y-transparent border-r-[#aaa]" /></div>
      <div className="flex h-[13px] w-[1801px] items-center justify-center gap-[2px] rounded-[6px] border border-[#8f8c89] bg-gradient-to-b from-white to-[#e3e1df] pr-[4px]">
        <i className="h-[3px] w-px bg-[#888]" /><i className="h-[3px] w-px bg-[#888]" /><i className="h-[3px] w-px bg-[#888]" />
      </div>
      <div className="h-[13px] w-[28px] rounded-r-[6px] border-r border-[#aaa]" />
      <div className="flex flex-1 justify-center"><div className="h-0 w-0 border-y-[3px] border-l-[4px] border-y-transparent border-l-[#555]" /></div>
    </div>
  );
}

export default function App() {
  return (
    <div className="flex h-[1080px] w-[1920px] flex-col overflow-hidden font-['Noto_Sans','Open_Sans',sans-serif]">
      <TopPanel />
      <div className="flex min-h-0 flex-1">
        <Launcher />
        <div className="flex min-w-0 flex-1 flex-col">
          <TabStrip />
          <AddressBar />
          <Page />
          <ScrollBar />
        </div>
      </div>
    </div>
  );
}
